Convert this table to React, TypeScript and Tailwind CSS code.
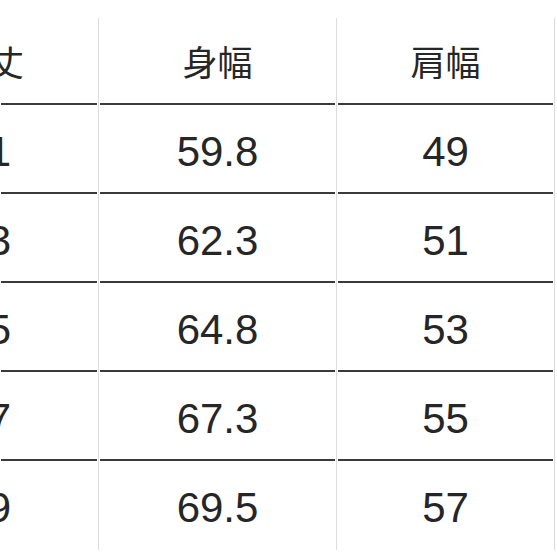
const ROWS = [
  ["71", "59.8", "49"],
  ["73", "62.3", "51"],
  ["75", "64.8", "53"],
  ["77", "67.3", "55"],
  ["79", "69.5", "57"],
];

const WIDTHS = ["w-[99px]", "w-[238px]", "w-[218px]"];

function Cell({
  w,
  first,
  line,
  children,
  h,
}: {
  w: string;
  first: boolean;
  line: boolean;
  h: string;
  children: React.ReactNode;
}) {
  return (
    <div className={`${w} ${h} flex shrink-0 flex-col border-r border-[#dcdcdc]`}>
      <div
        className={`flex flex-1 items-center ${
          first ? "justify-end overflow-hidden" : "justify-center"
        }`}
      >
        {children}
      </div>
      <div className={`mx-[1px] h-[2px] ${line ? "bg-[#3a3a3a]" : "bg-transparent"}`} />
    </div>
  );
}

export default function App() {
  return (
    <div className="h-[557px] w-[557px] overflow-hidden bg-white text-[#262626]">
      <div className="flex h-[18px]" />
      <div className="flex">
        {["着丈", "身幅", "肩幅"].map((t, i) => (
          <Cell key={t} w={WIDTHS[i]} first={i === 0} line h="h-[87px]">
            <span
              className={`whitespace-nowrap text-[35px] leading-none ${i === 0 ? "pr-[74px]" : ""}`}
              style={{ fontFamily: '"Noto Sans CJK JP", "Noto Sans", sans-serif' }}
            >
              {t}
            </span>
          </Cell>
        ))}
      </div>
      {ROWS.map((r, ri) => (
        <div key={ri} className="flex">
          {r.map((v, i) => (
            <Cell
              key={i}
              w={WIDTHS[i]}
              first={i === 0}
              line={ri < ROWS.length - 1}
              h="h-[89px]"
            >
              <span
                className={`whitespace-nowrap pt-[7px] text-[42px] leading-none ${
                  i === 0 ? "pr-[87px]" : ""
                }`}
                style={{ fontFamily: '"Liberation Sans", Arial, sans-serif' }}
              >
                {v}
              </span>
            </Cell>
          ))}
        </div>
      ))}
    </div>
  );
}
